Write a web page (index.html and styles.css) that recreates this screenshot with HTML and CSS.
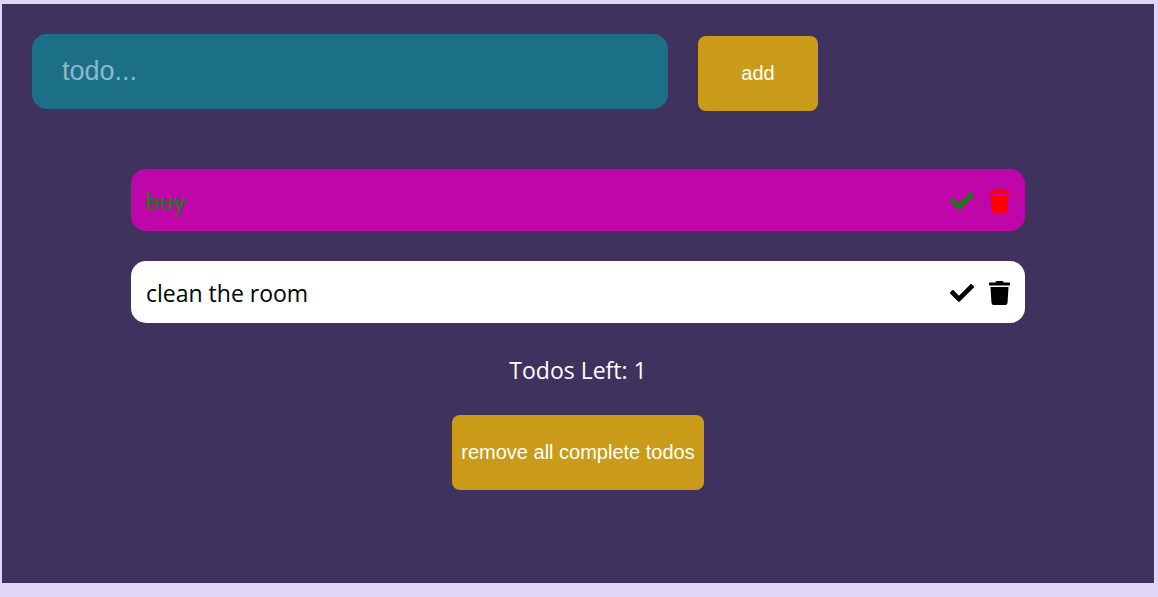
FILE: index.html
```html
<!DOCTYPE html>
<html lang="en">
<head>
<meta charset="utf-8">
<meta name="viewport" content="width=device-width, initial-scale=1">
<title>Todos</title>
<link rel="stylesheet" href="styles.css">
</head>
<body>
<svg class="symbols" aria-hidden="true">
  <symbol id="check" viewBox="0 0 512 512"><path d="M173.898 439.404l-166.4-166.4c-9.997-9.997-9.997-26.206 0-36.204l36.203-36.204c9.997-9.998 26.207-9.998 36.204 0L192 312.69 432.095 72.596c9.997-9.997 26.207-9.997 36.204 0l36.203 36.204c9.997 9.997 9.997 26.206 0 36.204l-294.4 294.401c-9.998 9.997-26.207 9.997-36.204-.001z"/></symbol>
  <symbol id="trash" viewBox="0 0 448 512"><path d="M432 32H312l-9.4-18.7A24 24 0 0 0 281.1 0H166.8a23.72 23.72 0 0 0-21.4 13.3L136 32H16A16 16 0 0 0 0 48v32a16 16 0 0 0 16 16h416a16 16 0 0 0 16-16V48a16 16 0 0 0-16-16zM53.2 467a48 48 0 0 0 47.9 45h245.8a48 48 0 0 0 47.9-45L416 128H32z"/></symbol>
</svg>
<main class="app">
  <form class="entry">
    <input class="entry-input" type="text" placeholder="todo..." aria-label="New todo">
    <button class="btn entry-add" type="button">add</button>
  </form>
  <ul class="todos">
    <li class="todo todo-done">
      <span class="todo-text">buy</span>
      <button class="icon-btn icon-check" type="button" aria-label="Toggle buy"><svg class="icon"><use href="#check"/></svg></button>
      <button class="icon-btn icon-trash" type="button" aria-label="Delete buy"><svg class="icon"><use href="#trash"/></svg></button>
    </li>
    <li class="todo">
      <span class="todo-text">clean the room</span>
      <button class="icon-btn icon-check" type="button" aria-label="Toggle clean the room"><svg class="icon"><use href="#check"/></svg></button>
      <button class="icon-btn icon-trash" type="button" aria-label="Delete clean the room"><svg class="icon"><use href="#trash"/></svg></button>
    </li>
  </ul>
  <p class="count">Todos Left: 1</p>
  <button class="btn clear" type="button">remove all complete todos</button>
</main>
</body>
</html>
```
FILE: styles.css
```css
* {
  box-sizing: border-box;
}

body {
  margin: 0;
  min-height: 100vh;
  padding: 4px 4px 14px 2px;
  display: flex;
  background: #dfd6f7;
  font-family: "Segoe UI", "Open Sans", "Noto Sans", sans-serif;
  font-size: 23px;
}

.symbols {
  display: none;
}

.app {
  flex: 1;
  display: flex;
  flex-direction: column;
  align-items: center;
  padding: 30px;
  background: #40325f;
}

.entry {
  width: 100%;
  display: flex;
  align-items: flex-end;
  gap: 30px;
}

.entry-input {
  flex: 0 1 636px;
  min-width: 0;
  height: 75px;
  margin-bottom: 2px;
  padding: 0 30px;
  border: 0;
  border-radius: 15px;
  background: #1b7088;
  color: #fff;
  font-family: "Liberation Sans", Arial, sans-serif;
  font-size: 27px;
}

.entry-input::placeholder {
  color: #8db9c5;
  opacity: 1;
}

.btn {
  height: 75px;
  padding: 0 9px;
  border: 0;
  border-radius: 8px;
  background: #c99b18;
  color: #fff;
  font-family: "Liberation Sans", Arial, sans-serif;
  font-size: 20px;
}

.entry-add {
  flex: none;
  width: 120px;
}

.todos {
  align-self: stretch;
  margin: 58px 99px 0;
  padding: 0;
  display: grid;
  gap: 30px;
  list-style: none;
}

.todo {
  height: 62px;
  padding: 2px 15px 0;
  display: flex;
  align-items: center;
  gap: 15px;
  border-radius: 15px;
  background: #fff;
  color: #000;
}

.todo-done {
  background: #bf06a9;
  color: #148014;
}

.todo-text {
  flex: 1;
}

.todo-done .todo-text {
  text-decoration: line-through;
}

.todo-done .icon-trash {
  color: #f00;
}

.icon-btn {
  flex: none;
  display: block;
  width: 24px;
  height: 24px;
  padding: 0;
  border: 0;
  background: none;
  color: inherit;
}

.icon-trash {
  width: 21px;
}

.icon {
  display: block;
  width: 100%;
  height: 100%;
  fill: currentColor;
}

.count {
  margin: 31px 0 29px;
  line-height: 32px;
  color: #fff;
}
```
